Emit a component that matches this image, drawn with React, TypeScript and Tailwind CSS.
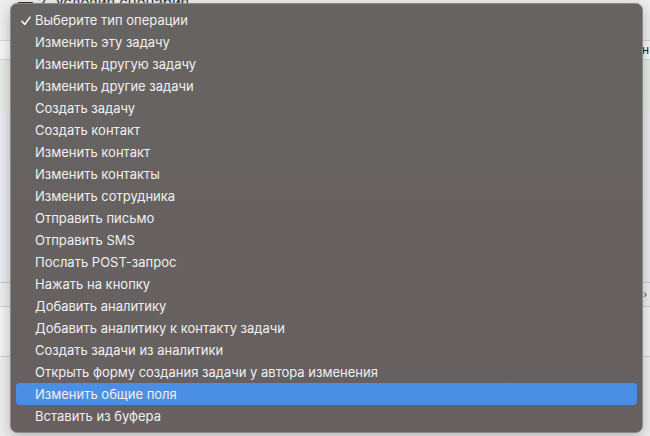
import { useState } from "react";

const options = [
    "Выберите тип операции",
    "Изменить эту задачу",
    "Изменить другую задачу",
    "Изменить другие задачи",
    "Создать задачу",
    "Создать контакт",
    "Изменить контакт",
    "Изменить контакты",
    "Изменить сотрудника",
    "Отправить письмо",
    "Отправить SMS",
    "Послать POST-запрос",
    "Нажать на кнопку",
    "Добавить аналитику",
    "Добавить аналитику к контакту задачи",
    "Создать задачи из аналитики",
    "Открыть форму создания задачи у автора изменения",
    "Изменить общие поля",
    "Вставить из буфера",
];

function Check() {
    return (
        <svg width="10" height="10" viewBox="0 0 10 10" className="shrink-0">
            <path d="M1 5.4 L3.8 8.4 L9 1.2" fill="none" stroke="#f2f2f2" strokeWidth="1.6" strokeLinecap="round" strokeLinejoin="round" />
        </svg>
    );
}

export default function App() {
    const [selected] = useState(0);
    const [hovered, setHovered] = useState(17);

    return (
        <div className="relative w-[650px] h-[436px] overflow-hidden bg-[#efefef]" style={{ fontFamily: 'Inter, "Liberation Sans", Arial, sans-serif' }}>
            {/* page behind the menu */}
            <div className="flex flex-col h-full">
                <div className="h-[4px] flex items-end pl-[18px]">
                    <span className="text-[15px] leading-none text-[#333] -mb-[6px]">— 2. Условия сценария</span>
                </div>
                <div className="h-[36px]" />
                <div className="h-[20px] border-y border-[#d6d6d6] bg-[#f7f7f7] flex justify-end items-center pr-[1px]">
                    <span className="text-[12px] text-[#222]">нн</span>
                </div>
                <div className="h-[52px] bg-[#e8ece9]" />
                <div className="h-[170px] bg-[#e9ebf0]" />
                <div className="h-[24px] border-t border-[#c8c8c8] bg-[#eeeeee] flex justify-end items-center pr-[3px]">
                    <span className="text-[10px] text-[#444]">›</span>
                </div>
                <div className="h-[50px] border-t border-[#d0d0d0] bg-[#f3f3f3]" />
                <div className="flex-1 border-t border-[#cfcfcf] bg-[#eeeeee]" />
            </div>

            {/* native select popup */}
            <div className="absolute left-[10px] top-[3px] w-[633px] h-[430px] rounded-[7px] border border-[#8c8a89] bg-gradient-to-b from-[#666462] to-[#675f60] shadow-[0_4px_14px_rgba(0,0,0,0.25)] py-[5px] px-[5px]">
                <ul className="flex flex-col">
                    {options.map((opt, i) => (
                        <li
                            key={opt}
                            onMouseEnter={() => setHovered(i)}
                            className={
                                "h-[22px] flex items-center rounded-[4px] text-[13px] text-[#f1f0f0] " +
                                (hovered === i ? "bg-[#4a8fe4]" : "")
                            }
                        >
                            <span className="w-[19px] pl-[5px] pt-[1px] flex items-center">
                                {selected === i && <Check />}
                            </span>
                            <span className="whitespace-nowrap pt-[1px]">{opt}</span>
                        </li>
                    ))}
                </ul>
            </div>
        </div>
    );
}
